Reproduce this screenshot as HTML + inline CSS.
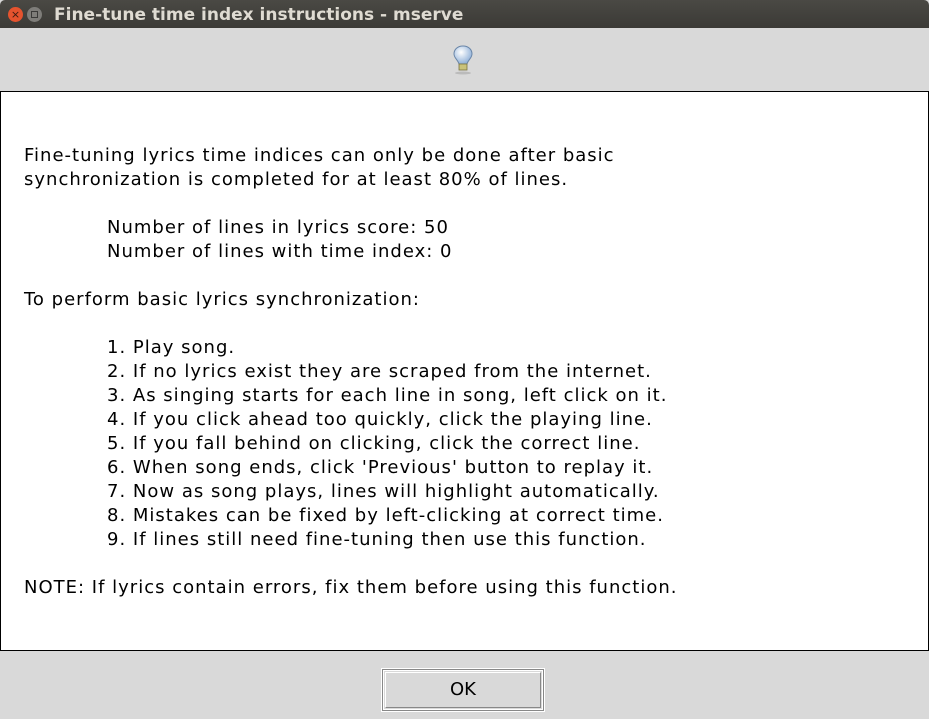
<!DOCTYPE html>
<html><head><style>
body{margin:0;width:929px;height:719px;background:#d9d9d9;position:relative;overflow:hidden;font-family:"DejaVu Sans",sans-serif}
.t{position:absolute;left:0;top:0;width:929px;height:28px;background:linear-gradient(#4a4944,#3b3a36);border-radius:5px 5px 0 0}
.t span{position:absolute;left:54px;top:5px;color:#dfdbd2;font-weight:bold;font-size:17px}
.c1{position:absolute;left:8px;top:7px;width:15px;height:15px;border-radius:50%;background:#e5532e;color:#3a1a10;font-size:11px;line-height:15px;text-align:center}
.c2{position:absolute;left:27px;top:7px;width:15px;height:15px;border-radius:50%;background:#7e7d79}
.c2:after{content:"";position:absolute;left:4px;top:4px;width:5px;height:5px;border:1px solid #3a3a38}
.box{position:absolute;left:0;top:91px;width:927px;height:558px;background:#fff;border:1px solid #000}
.l{position:absolute;font-size:18px;letter-spacing:1px;color:#000;white-space:pre;line-height:24px}
.ok{position:absolute;left:382px;top:669px;width:160px;height:40px;border:1px solid #888;box-shadow:inset 1px 1px 0 #fff,inset -1px -1px 0 #fff;outline:1px solid #fff;background:#d9d9d9;text-align:center;line-height:40px;font-size:18px}
.ok:before{content:"";position:absolute;left:2px;top:2px;right:2px;bottom:2px;border:1px solid #888;border-top-color:#fff;border-left-color:#fff}
</style></head><body>
<div class="t"><div class="c1">×</div><div class="c2"></div><span>Fine-tune time index instructions - mserve</span></div>
<svg style="position:absolute;left:452px;top:44px" width="22" height="32" viewBox="0 0 22 32">
<defs><radialGradient id="g" cx="40%" cy="35%" r="65%"><stop offset="0" stop-color="#fff"/><stop offset="1" stop-color="#8fb0d8"/></radialGradient></defs>
<path d="M11 2 C5 2 2 6 2 10 C2 14 6 16 7 20 L15 20 C16 16 20 14 20 10 C20 6 17 2 11 2Z" fill="url(#g)" stroke="#6a86a8"/>
<rect x="7" y="20" width="8" height="6" fill="#c9c27a" stroke="#7a7440" stroke-width=".8"/>
<ellipse cx="11" cy="29" rx="8" ry="1.5" fill="#bbb"/>
</svg>
<div class="box"></div>
<div class="l" style="left:24px;top:144px">Fine-tuning lyrics time indices can only be done after basic
synchronization is completed for at least 80% of lines.</div>
<div class="l" style="left:107px;top:216px">Number of lines in lyrics score: 50
Number of lines with time index: 0</div>
<div class="l" style="left:24px;top:288px">To perform basic lyrics synchronization:</div>
<div class="l" style="left:107px;top:336px">1. Play song.
2. If no lyrics exist they are scraped from the internet.
3. As singing starts for each line in song, left click on it.
4. If you click ahead too quickly, click the playing line.
5. If you fall behind on clicking, click the correct line.
6. When song ends, click 'Previous' button to replay it.
7. Now as song plays, lines will highlight automatically.
8. Mistakes can be fixed by left-clicking at correct time.
9. If lines still need fine-tuning then use this function.</div>
<div class="l" style="left:24px;top:576px">NOTE: If lyrics contain errors, fix them before using this function.</div>
<div class="ok"><span style="position:relative">OK</span></div>
</body></html>
